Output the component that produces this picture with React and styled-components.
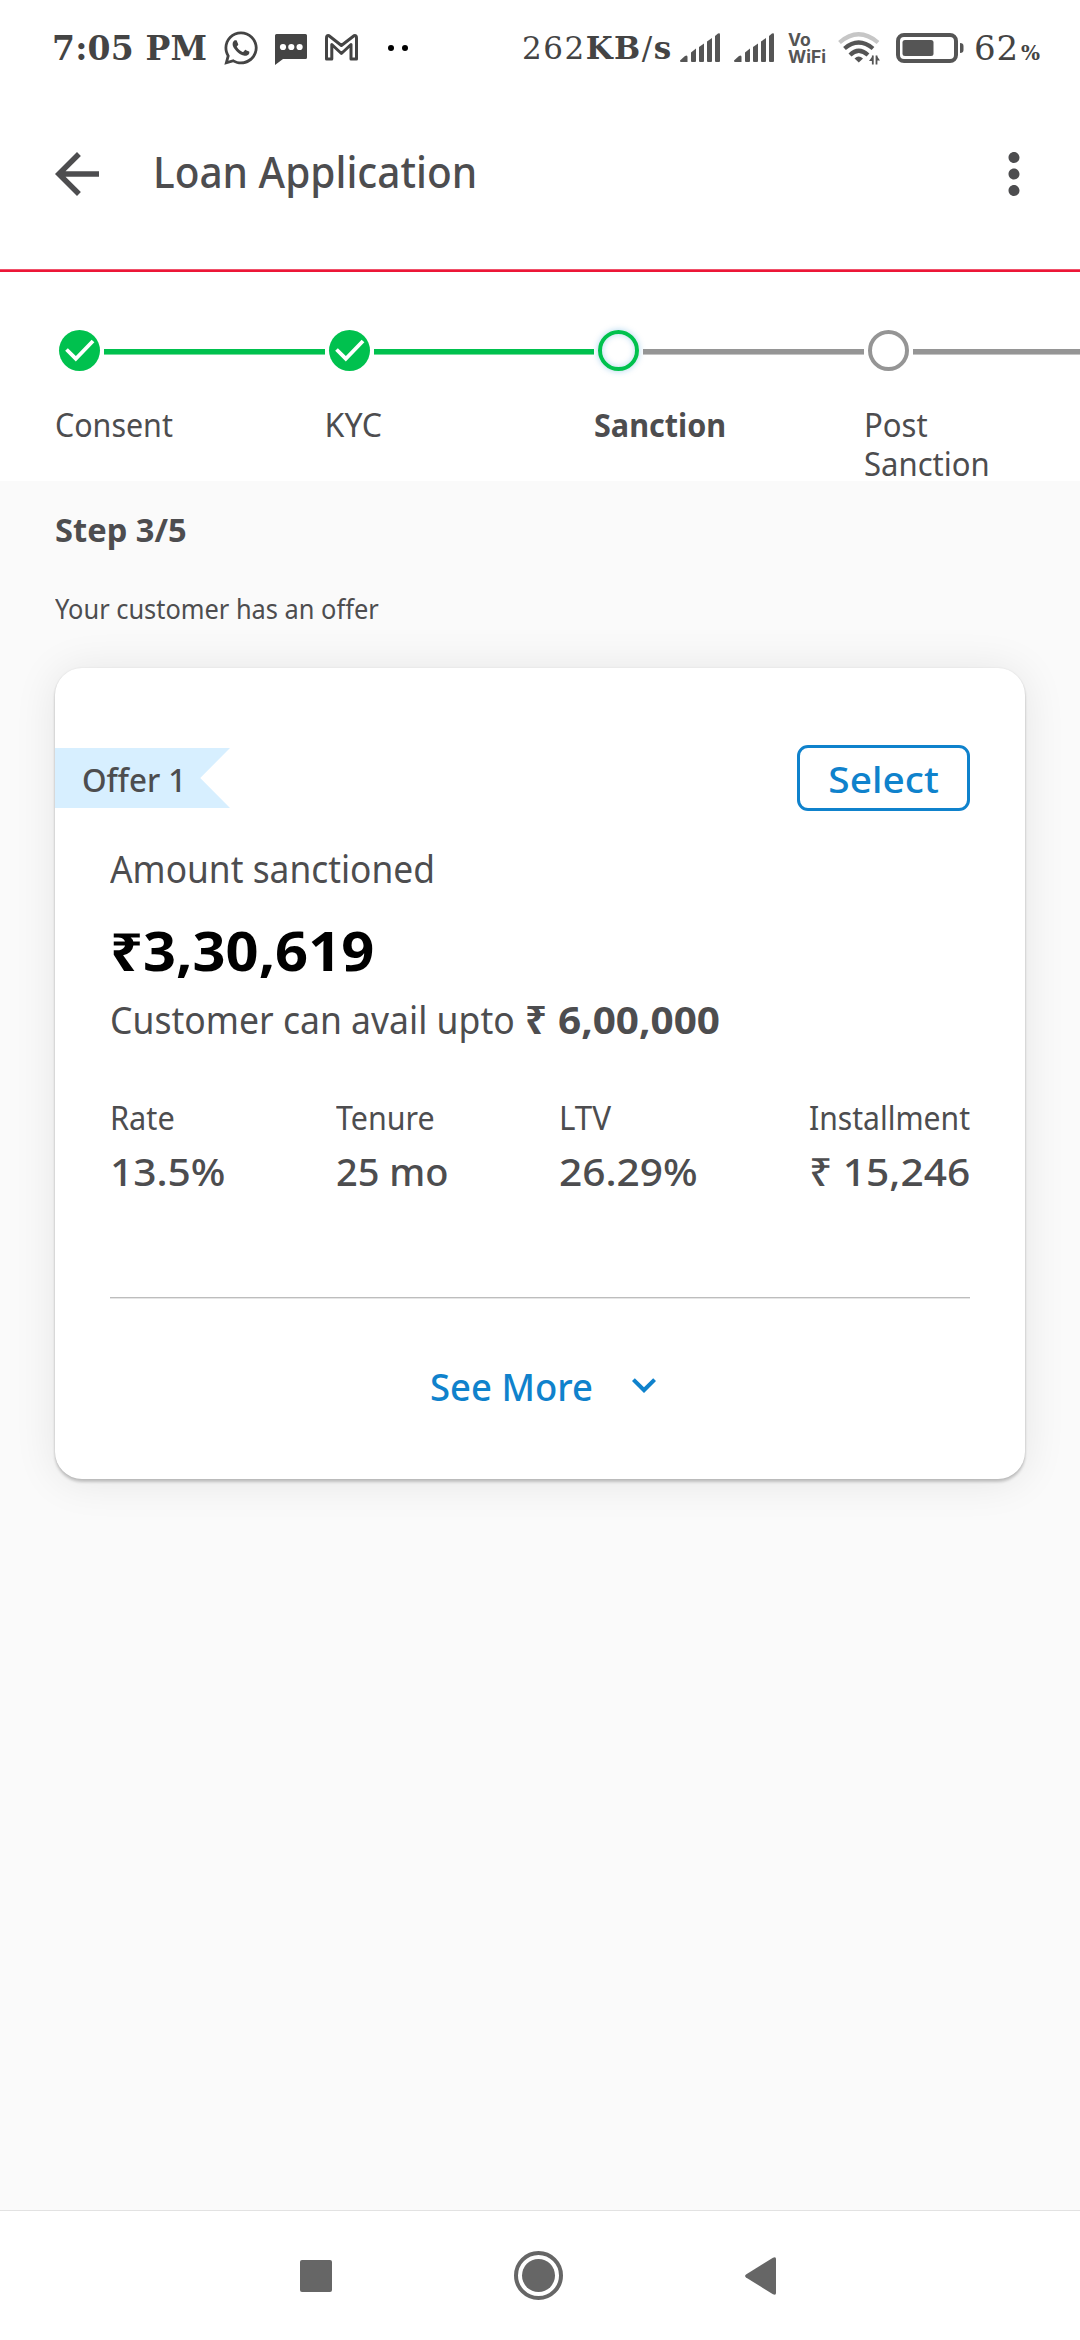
import React from "react";
import styled, { createGlobalStyle, css } from "styled-components";
import { MdArrowBack, MdMoreVert, MdKeyboardArrowDown } from "react-icons/md";
import { FaWhatsapp } from "react-icons/fa";

const ink = "#4d4d4f";
const statusInk = "#444";
const iconInk = "#555";
const green = "#00c14e";
const grey = "#959595";
const blue = "#0f82cc";

const Global = createGlobalStyle`
  * { box-sizing: border-box; }
  body { margin: 0; background: #fff; font-family: "Noto Sans", sans-serif; color: ${ink}; }
  svg { display: block; flex: none; }
`;

const Screen = styled.div`
  width: 1080px;
  height: 2340px;
  display: flex;
  flex-direction: column;
  overflow: hidden;
  background: #fff;
`;

/* Text with an adjustable glyph width */
const Text = styled.span`
  display: block;
  width: max-content;
  white-space: nowrap;
  line-height: 1;
  font-size: ${(p) => p.$size}px;
  font-weight: ${(p) => p.$weight || 400};
  transform: scaleX(${(p) => p.$stretch || 1});
  transform-origin: ${(p) => p.$origin || "left"} center;
`;

/* ---------- status bar ---------- */
const StatusBar = styled.div`
  height: 96px;
  display: flex;
  align-items: center;
  padding-left: 52px;
  font-family: "DejaVu Serif", serif;
  color: ${statusInk};
`;
const Clock = styled.div`
  width: 172px;
  font-size: 33px;
  font-weight: 700;
  line-height: 1;
  white-space: nowrap;
  letter-spacing: 0.2px;
`;
const Notifications = styled.div`
  width: 298px;
  display: flex;
  align-items: center;
  gap: 18px;
`;
const WhatsappBox = styled.div`
  width: 33px;
  height: 38px;
  display: flex;
  justify-content: center;
`;
const MoreDots = styled.svg`
  margin-left: 12px;
`;
const Speed = styled.div`
  width: 158px;
  font-size: 31px;
  line-height: 1;
  white-space: nowrap;
  letter-spacing: 1.5px;
`;
const Indicators = styled.div`
  display: flex;
  align-items: center;
  gap: 14px;
`;
const VoWifi = styled.div`
  width: 36px;
  display: flex;
  flex-direction: column;
  font: 700 17.5px/17px Inter, sans-serif;
  color: ${iconInk};
`;
const BatteryText = styled.div`
  display: flex;
  align-items: baseline;
  font-size: 34px;
  line-height: 1;
  letter-spacing: 0.8px;
  margin-left: -6px;
`;
const Percent = styled.span`
  font-size: 20px;
  font-weight: 700;
  margin-left: 2px;
`;

const Signal = () => (
  <svg width="40" height="30" viewBox="0 0 40 30" fill={iconInk}>
    <path d="M0 27.5 L5 23 Q7.5 21.500 7.500 24 V29 H1 Q0 29 0 27.500Z" />
    <path d="M11 19.500 L16 15.500 V28 Q16 29 15 29 H12 Q11 29 11 28Z" />
    <path d="M19 14 L24 10.500 V28 Q24 29 23 29 H20 Q19 29 19 28Z" />
    <path d="M27 8.500 L32 5 V28 Q32 29 31 29 H28 Q27 29 27 28Z" />
    <path d="M35 3 L38 .5 Q40 -.5 40 1.500 V28 Q40 29 39 29 H36 Q35 29 35 28Z" />
  </svg>
);

const Wifi = () => (
  <svg width="44" height="34" viewBox="0 0 44 34" fill="none" strokeWidth="4.200">
    <path d="M1.500 11.500 Q20.500 -5 40 11.500" stroke="#c6c6c6" />
    <path d="M6.500 17.500 Q20.500 5.500 35 17.500" stroke={iconInk} />
    <path d="M12 24 Q20.500 15.500 30 24" stroke={iconInk} />
    <path d="M16.500 27.500 Q20.500 23.500 25 27.500 L20.800 31.500Z" fill={iconInk} stroke="none" />
    <path d="M34.800 24.500 V33.500 M38.500 24.500 V33.500" stroke={iconInk} strokeWidth="1.800" />
    <path d="M35 24.500 V30 H31Z M38.500 24.500 L42 29.500 H38.500Z" fill={iconInk} stroke="none" />
  </svg>
);

/* ---------- header ---------- */
const Header = styled.header`
  height: 173px;
  display: flex;
  align-items: flex-start;
  padding: 45px 33px 0 44px;
`;
const Title = styled.h1`
  margin: 9px auto 0 42.500px;
  font-size: 43px;
  font-weight: 500;
  line-height: 1;
  transform: scaleX(0.943);
  transform-origin: left center;
`;
const HeaderRule = styled.div`
  height: 3px;
  flex: none;
  background: #ec1637;
  border-top: 1px solid #f0526b;
`;

/* ---------- stepper ---------- */
const Stepper = styled.div`
  height: 209px;
  flex: none;
  display: flex;
  padding: 58px 0 0 55px;
`;
const Step = styled.div`
  width: 269.600px;
  flex: none;
`;
const Track = styled.div`
  display: flex;
  align-items: flex-start;
  gap: 4.300px;
  padding-left: 4px;
`;
const Dot = styled.div`
  width: 41px;
  height: 41px;
  flex: none;
  border-radius: 50%;
  ${(p) =>
    p.$state === "done"
      ? css`background: ${green};`
      : css`border: 4px solid ${p.$state === "active" ? green : grey};`}
  ${(p) =>
    p.$state === "active" &&
    css`box-shadow: 0 0 6px rgba(15, 130, 204, 0.35), inset 0 0 6px rgba(15, 130, 204, 0.3);`}
`;
const Connector = styled.div`
  flex: 1;
  height: 6px;
  margin-top: 19px;
  background: ${(p) => (p.$done ? green : grey)};
  border-bottom: 1px solid ${(p) => (p.$done ? "#73dc9c" : "#c3c3c3")};
`;
const StepLabel = styled.div`
  width: 170px;
  margin-top: 34px;
  font-size: 32px;
  line-height: 39px;
  font-weight: ${(p) => (p.$bold ? 700 : 400)};
  transform: scaleX(${(p) => p.$stretch});
  transform-origin: left center;
`;

const steps = [
  { label: "Consent", state: "done", lineDone: true, stretch: 0.95 },
  { label: "KYC", state: "done", lineDone: true, stretch: 1 },
  { label: "Sanction", state: "active", stretch: 0.955 },
  { label: "Post Sanction", state: "todo", stretch: 0.97 },
];

/* ---------- offer ---------- */
const Content = styled.main`
  flex: 1;
  background: #fafafa;
  padding: 33px 55px 0;
`;
const Intro = styled.div`
  display: flex;
  flex-direction: column;
  gap: 49px;
`;
const Card = styled.section`
  margin-top: 46px;
  height: 811px;
  padding-top: 77px;
  border-radius: 27px;
  background: #fff;
  box-shadow: 0 3px 3px rgba(0, 0, 0, 0.2), 0 0 2px rgba(0, 0, 0, 0.1), 0 2px 44px rgba(0, 0, 0, 0.09);
`;
const CardTop = styled.div`
  display: flex;
  align-items: center;
  justify-content: space-between;
  padding-right: 55px;
`;
const Ribbon = styled.div`
  width: 175px;
  height: 60px;
  display: flex;
  align-items: center;
  padding: 3px 0 0 27px;
  background: #d7efff;
  clip-path: polygon(0 0, 100% 0, 83% 50%, 100% 100%, 0 100%);
`;
const SelectButton = styled.button`
  width: 173px;
  height: 66px;
  padding: 0;
  display: flex;
  align-items: center;
  justify-content: center;
  border: 3px solid ${blue};
  border-radius: 11px;
  background: #fff;
  color: ${blue};
  font-family: inherit;
`;
const CardBody = styled.div`
  display: flex;
  flex-direction: column;
  padding: 38px 55px 0;
`;
const Amount = styled.div`
  margin-top: 37px;
  height: 53px;
  color: #000;
`;
const AvailRow = styled.div`
  display: grid;
  grid-template-columns: 415px 33px auto;
  margin-top: 23px;
`;
const Stats = styled.div`
  display: grid;
  grid-template-columns: 226px 223px 250px auto;
  margin-top: 64px;
`;
const Stat = styled.div`
  display: flex;
  flex-direction: column;
  gap: 18px;
`;
const Divider = styled.div`
  margin-top: 107px;
  height: 2px;
  background: #bdbdbd;
  border-bottom: 1px solid #e6e6e6;
`;
const SeeMore = styled.div`
  margin-top: 62px;
  padding-left: 18px;
  height: 48px;
  display: flex;
  align-items: center;
  justify-content: center;
  gap: 20px;
  color: ${blue};
`;
const SeeMoreLabel = styled.div`
  padding-top: 2px;
`;

const stats = [
  { label: "Rate", labelStretch: 0.96, value: "13.5%", stretch: 1.07 },
  { label: "Tenure", labelStretch: 0.95, value: "25 mo", stretch: 1 },
  { label: "LTV", labelStretch: 0.98, value: "26.29%", stretch: 1.07 },
  { label: "Installment", labelStretch: 0.94, value: "₹ 15,246", stretch: 1.07 },
];

/* ---------- navigation bar ---------- */
const NavBar = styled.nav`
  height: 130px;
  flex: none;
  display: flex;
  align-items: center;
  gap: 182px;
  padding-left: 300px;
  border-top: 1px solid #e2e2e2;
  background: #fff;
`;
const RecentsButton = styled.div`
  width: 32px;
  height: 32px;
  border-radius: 2px;
  background: #666;
`;
const HomeRing = styled.div`
  width: 49px;
  height: 49px;
  padding: 4px;
  border: 4px solid #666;
  border-radius: 50%;
`;
const HomeDisc = styled.div`
  width: 33px;
  height: 33px;
  border-radius: 50%;
  background: #666;
`;

export default function App() {
  return (
    <Screen>
      <Global />
      <StatusBar>
        <Clock>7:05 PM</Clock>
        <Notifications>
          <WhatsappBox>
            <FaWhatsapp size={38} />
          </WhatsappBox>
          <svg width="32" height="34" viewBox="0 0 32 34" fill={statusInk}>
            <path d="M1.500 3 H30.500 Q32 3 32 4.500 V26.500 Q32 28 30.500 28 H8 L0 34 V4.500 Q0 3 1.500 3Z" />
            <g fill="#fff">
              <circle cx="8" cy="16" r="3.100" />
              <circle cx="16.300" cy="16" r="3.100" />
              <circle cx="24.600" cy="16" r="3.100" />
            </g>
          </svg>
          <svg width="33" height="28" viewBox="0 0 33 28" fill="none" stroke={statusInk} strokeWidth="3" strokeLinejoin="round">
            <path d="M1.500 4 V25 H6.800 V10.500 L16.400 19.500 L26 10.500 V25 H31.500 V4 Q31.500 1 29 1.700 L16.400 11.500 L4 1.700 Q1.500 1 1.500 4Z" />
          </svg>
          <MoreDots width="20" height="6" viewBox="0 0 20 6" fill="#000">
            <circle cx="3" cy="3" r="3" />
            <circle cx="17" cy="3" r="3" />
          </MoreDots>
        </Notifications>
        <Speed>
          262<b>KB</b>/<b>s</b>
        </Speed>
        <Indicators>
          <Signal />
          <Signal />
          <VoWifi>
            <span>Vo</span>
            <span>WiFi</span>
          </VoWifi>
          <Wifi />
          <svg width="70" height="30" viewBox="0 0 70 30">
            <rect x="2" y="2" width="58" height="26" rx="6" fill="none" stroke={iconInk} strokeWidth="4" />
            <rect x="6.500" y="7" width="31" height="16" rx="2.500" fill={iconInk} />
            <path d="M64 10 Q67.500 10 67.500 13 V17 Q67.500 20 64 20Z" fill={iconInk} />
          </svg>
          <BatteryText>
            62<Percent>%</Percent>
          </BatteryText>
        </Indicators>
      </StatusBar>

      <Header>
        <MdArrowBack size={66} />
        <Title>Loan Application</Title>
        <MdMoreVert size={66} />
      </Header>
      <HeaderRule />

      <Stepper>
        {steps.map((s) => (
          <Step key={s.label}>
            <Track>
              <Dot $state={s.state}>
                {s.state === "done" && (
                  <svg width="41" height="41" viewBox="0 0 41 41" fill="none" stroke="#fff" strokeWidth="3.800">
                    <path d="M7.500 19.500 L16.800 28.700 L34 11" />
                  </svg>
                )}
              </Dot>
              <Connector $done={s.lineDone} />
            </Track>
            <StepLabel $bold={s.state === "active"} $stretch={s.stretch}>
              {s.label}
            </StepLabel>
          </Step>
        ))}
      </Stepper>

      <Content>
        <Intro>
          <Text $size={32} $weight={700} $stretch={1.02}>Step 3/5</Text>
          <Text $size={27} $stretch={0.94}>Your customer has an offer</Text>
        </Intro>
        <Card>
          <CardTop>
            <Ribbon>
              <Text $size={32} $weight={500} $stretch={0.98}>Offer 1</Text>
            </Ribbon>
            <SelectButton>
              <Text $size={37} $weight={500} $stretch={1.05} $origin="center">Select</Text>
            </SelectButton>
          </CardTop>
          <CardBody>
            <Text $size={38} $stretch={0.93}>Amount sanctioned</Text>
            <Amount>
              <Text $size={53} $weight={700} $stretch={1.09}>₹3,30,619</Text>
            </Amount>
            <AvailRow>
              <Text $size={38} $stretch={0.935}>Customer can avail upto</Text>
              <Text $size={38} $weight={700}>₹</Text>
              <Text $size={38} $weight={700} $stretch={1.065}>6,00,000</Text>
            </AvailRow>
            <Stats>
              {stats.map((s) => (
                <Stat key={s.label}>
                  <Text $size={32} $stretch={s.labelStretch}>{s.label}</Text>
                  <Text $size={38} $weight={500} $stretch={s.stretch}>{s.value}</Text>
                </Stat>
              ))}
            </Stats>
            <Divider />
            <SeeMore>
              <SeeMoreLabel>
                <Text $size={38} $weight={500} $stretch={0.96}>See More</Text>
              </SeeMoreLabel>
              <MdKeyboardArrowDown size={48} />
            </SeeMore>
          </CardBody>
        </Card>
      </Content>

      <NavBar>
        <RecentsButton />
        <HomeRing>
          <HomeDisc />
        </HomeRing>
        <svg width="31" height="38" viewBox="0 0 31 38" fill="#666">
          <path d="M1 17.500 L28 .8 Q31 -.5 31 2 V36 Q31 38.500 28 37.200 L1 20.500 Q-.8 19 1 17.500Z" />
        </svg>
      </NavBar>
    </Screen>
  );
}
